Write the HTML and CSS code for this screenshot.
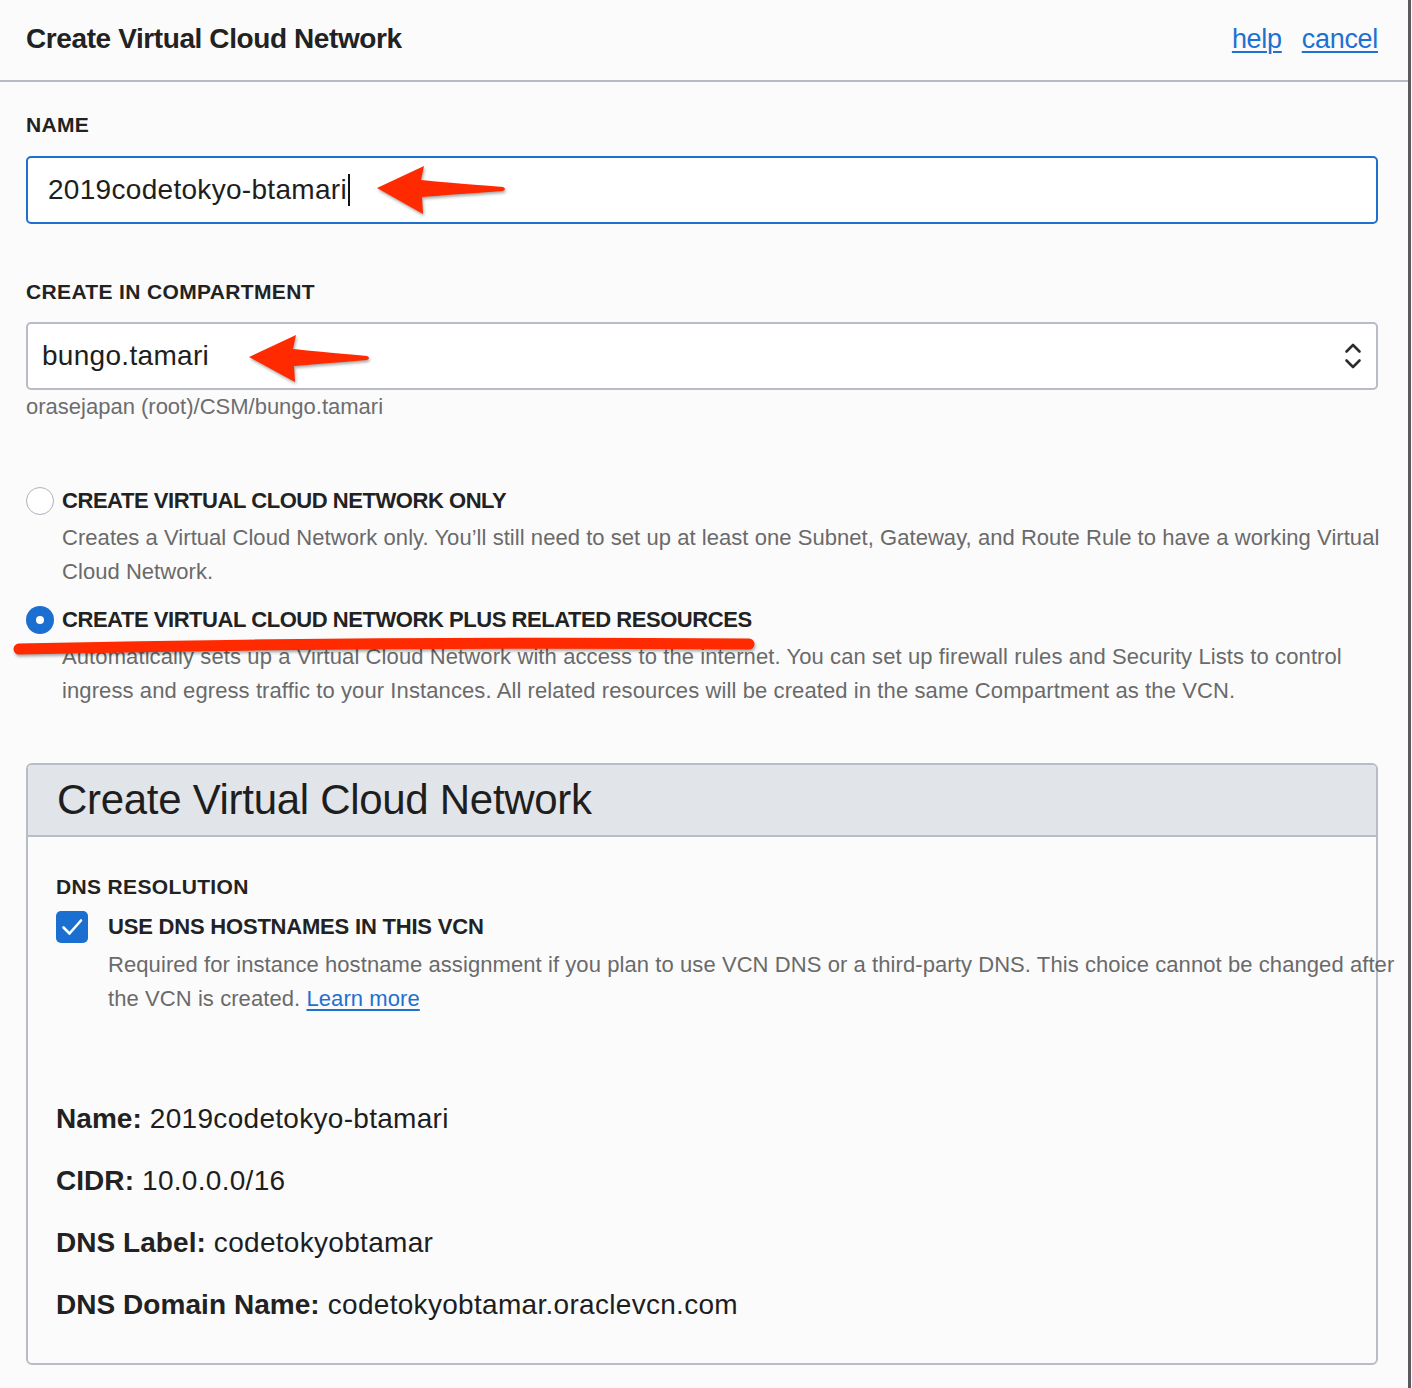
FILE: index.html
```html
<!DOCTYPE html>
<html lang="en">
<head>
<meta charset="utf-8">
<title>Create Virtual Cloud Network</title>
<link rel="stylesheet" href="styles.css">
</head>
<body>
<div class="page">
  <header class="topbar">
    <h1 class="topbar-title">Create Virtual Cloud Network</h1>
    <nav class="topbar-links">
      <a href="#" class="link">help</a>
      <a href="#" class="link">cancel</a>
    </nav>
  </header>

  <main class="content">
    <section class="field">
      <div class="field-label">NAME</div>
      <div class="input input-focused">
        <span class="input-text">2019codetokyo-btamari</span><span class="caret"></span>
      </div>
    </section>

    <section class="field field-compartment">
      <div class="field-label">CREATE IN COMPARTMENT</div>
      <div class="input select">
        <span class="select-text">bungo.tamari</span>
        <svg class="select-chevrons" width="20" height="32" viewBox="0 0 20 32">
          <path d="M3.5 11.5 L10 5 L16.5 11.5" fill="none" stroke="#2d2d2d" stroke-width="2.6" stroke-linecap="round" stroke-linejoin="round"/>
          <path d="M3.5 20.5 L10 27 L16.5 20.5" fill="none" stroke="#2d2d2d" stroke-width="2.6" stroke-linecap="round" stroke-linejoin="round"/>
        </svg>
      </div>
      <div class="field-help">orasejapan (root)/CSM/bungo.tamari</div>
    </section>

    <section class="options">
      <div class="option">
        <div class="option-row">
          <span class="radio"></span>
          <span class="option-label">CREATE VIRTUAL CLOUD NETWORK ONLY</span>
        </div>
        <p class="option-desc option-desc-first">Creates a Virtual Cloud Network only. You’ll still need to set up at least one Subnet, Gateway, and Route Rule to have a working Virtual<br>Cloud Network.</p>
      </div>
      <div class="option option-second">
        <div class="option-row">
          <span class="radio radio-checked"></span>
          <span class="option-label">CREATE VIRTUAL CLOUD NETWORK PLUS RELATED RESOURCES</span>
        </div>
        <p class="option-desc">Automatically sets up a Virtual Cloud Network with access to the internet. You can set up firewall rules and Security Lists to control<br>ingress and egress traffic to your Instances. All related resources will be created in the same Compartment as the VCN.</p>
      </div>
    </section>

    <section class="panel">
      <div class="panel-header">
        <h2 class="panel-title">Create Virtual Cloud Network</h2>
      </div>
      <div class="panel-body">
        <div class="field-label">DNS RESOLUTION</div>
        <div class="check-row">
          <span class="checkbox">
            <svg width="32" height="32" viewBox="0 0 32 32">
              <path d="M7.5 16.5 L13.5 22.5 L25 9.5" fill="none" stroke="#ffffff" stroke-width="2.6" stroke-linecap="round" stroke-linejoin="round"/>
            </svg>
          </span>
          <span class="check-label">USE DNS HOSTNAMES IN THIS VCN</span>
        </div>
        <p class="check-desc">Required for instance hostname assignment if you plan to use VCN DNS or a third-party DNS. This choice cannot be changed after<br>the VCN is created. <a href="#" class="link">Learn more</a></p>

        <dl class="summary">
          <div class="summary-row"><dt>Name:</dt><dd>2019codetokyo-btamari</dd></div>
          <div class="summary-row"><dt>CIDR:</dt><dd>10.0.0.0/16</dd></div>
          <div class="summary-row"><dt>DNS Label:</dt><dd>codetokyobtamar</dd></div>
          <div class="summary-row"><dt>DNS Domain Name:</dt><dd>codetokyobtamar.oraclevcn.com</dd></div>
        </dl>
      </div>
    </section>
  </main>

  <svg class="annotations" width="1412" height="1388" viewBox="0 0 1412 1388">
    <g fill="#ff2a00" class="red-mark">
      <path d="M377,188 L424,166 L421,180 Q440,182 503,187 Q507,189 503,191 Q445,195 422,197 L423,214 Z"/>
      <path d="M249,357 L296,335 L293,349 Q312,351 367,356 Q371,358 367,360 Q317,364 294,366 L295,382 Z"/>
    </g>
    <path class="red-mark" d="M19,649 Q380,641 749,644" fill="none" stroke="#ff2a00" stroke-width="11" stroke-linecap="round"/>
  </svg>
</div>
</body>
</html>
```

FILE: styles.css
```css
* { box-sizing: border-box; }

html, body {
  margin: 0;
  padding: 0;
  background: #fbfbfc;
}

body {
  font-family: "Liberation Sans", Arial, Helvetica, sans-serif;
  color: #222222;
}

.page {
  position: relative;
  width: 1411px;
  min-height: 1388px;
  border-right: 3px solid #5a5a5c;
  background: #fbfbfc;
}

/* top bar */
.topbar {
  height: 82px;
  display: flex;
  align-items: center;
  justify-content: space-between;
  padding: 0 30px 2px 26px;
  border-bottom: 2px solid #b6bac4;
}

.topbar-title {
  margin: 0;
  font-size: 28px;
  font-weight: 700;
  letter-spacing: -0.4px;
  color: #222222;
}

.topbar-links {
  display: flex;
  gap: 20px;
}

.link {
  color: #1f71d0;
  text-decoration: underline;
  text-underline-offset: 3px;
}

.topbar-links .link {
  font-size: 27px;
  font-weight: 400;
  letter-spacing: -0.3px;
  text-decoration-thickness: 1.5px;
}

/* content */
.content {
  padding: 31px 30px 0 26px;
}

.field-label {
  font-size: 21px;
  line-height: 24px;
  font-weight: 700;
  letter-spacing: 0.35px;
  color: #222222;
}

.input {
  margin-top: 19px;
  height: 68px;
  border: 2px solid #b8bcc6;
  border-radius: 5px;
  background: #ffffff;
  display: flex;
  align-items: center;
}

.input-focused {
  border-color: #1f6fd0;
  padding-left: 20px;
}

.input-text,
.select-text {
  font-size: 28px;
  color: #1e1e1e;
  letter-spacing: 0.3px;
}

.caret {
  display: inline-block;
  width: 2px;
  height: 32px;
  background: #111111;
  margin-left: 1px;
}

.field-compartment {
  margin-top: 56px;
}

.select {
  margin-top: 18px;
  padding-left: 14px;
  padding-right: 13px;
  justify-content: space-between;
}

.select-chevrons {
  display: block;
}

.field-help {
  margin-top: 5px;
  font-size: 22px;
  line-height: 24px;
  color: #6d6d6d;
  letter-spacing: 0;
}

/* radio options */
.options {
  margin-top: 68px;
}

.option-second {
  margin-top: 17px;
}

.option-row {
  display: flex;
  align-items: center;
  height: 28px;
}

.radio {
  width: 28px;
  height: 28px;
  border-radius: 50%;
  border: 1.5px solid #aeb2bb;
  background: #ffffff;
  flex: none;
  margin-right: 8px;
  position: relative;
}

.radio-checked {
  border: none;
  background: #1a6fd0;
}

.radio-checked::after {
  content: "";
  position: absolute;
  left: 10px;
  top: 10px;
  width: 8px;
  height: 8px;
  border-radius: 50%;
  background: #ffffff;
}

.option-label {
  font-size: 22px;
  font-weight: 700;
  letter-spacing: -0.45px;
  color: #222222;
}

.option-desc {
  margin: 6px 0 0 36px;
  font-size: 22px;
  line-height: 34px;
  letter-spacing: 0.1px;
  color: #6a6a6a;
  white-space: nowrap;
}

.option-desc-first {
  letter-spacing: 0.05px;
}

/* panel */
.panel {
  margin-top: 55px;
  border: 2px solid #b8bcc6;
  border-radius: 6px;
  background: #fbfbfc;
}

.panel-header {
  height: 72px;
  display: flex;
  align-items: center;
  padding-left: 29px;
  background: #e1e4e8;
  border-bottom: 2px solid #b8bcc6;
  border-radius: 4px 4px 0 0;
}

.panel-title {
  margin: 0;
  font-size: 42px;
  font-weight: 400;
  letter-spacing: -0.3px;
  color: #1e1e1e;
}

.panel-body {
  padding: 38px 29px 27px 28px;
}

.check-row {
  margin-top: 12px;
  display: flex;
  align-items: center;
  height: 32px;
}

.checkbox {
  width: 32px;
  height: 32px;
  border-radius: 5px;
  background: #1b6fd0;
  flex: none;
  margin-right: 20px;
}

.checkbox svg {
  display: block;
}

.check-label {
  font-size: 22px;
  font-weight: 700;
  letter-spacing: -0.2px;
  color: #222222;
}

.check-desc {
  margin: 5px 0 0 52px;
  font-size: 22px;
  line-height: 34px;
  letter-spacing: 0.08px;
  color: #6a6a6a;
  white-space: nowrap;
}

.check-desc .link {
  color: #1f71d0;
}

/* summary */
.summary {
  margin: 72px 0 0 0;
}

.summary-row {
  display: flex;
  align-items: center;
  height: 62px;
  font-size: 28px;
}

.summary-row dt {
  font-weight: 700;
  letter-spacing: 0.05px;
  color: #222222;
  margin-right: 8px;
}

.summary-row dd {
  margin: 0;
  letter-spacing: 0.3px;
  color: #1e1e1e;
}

/* red annotation overlay */
.annotations {
  position: absolute;
  left: 0;
  top: 0;
  pointer-events: none;
}

.red-mark {
  filter: drop-shadow(1px 2px 1.5px rgba(0, 0, 0, 0.35));
}
```
